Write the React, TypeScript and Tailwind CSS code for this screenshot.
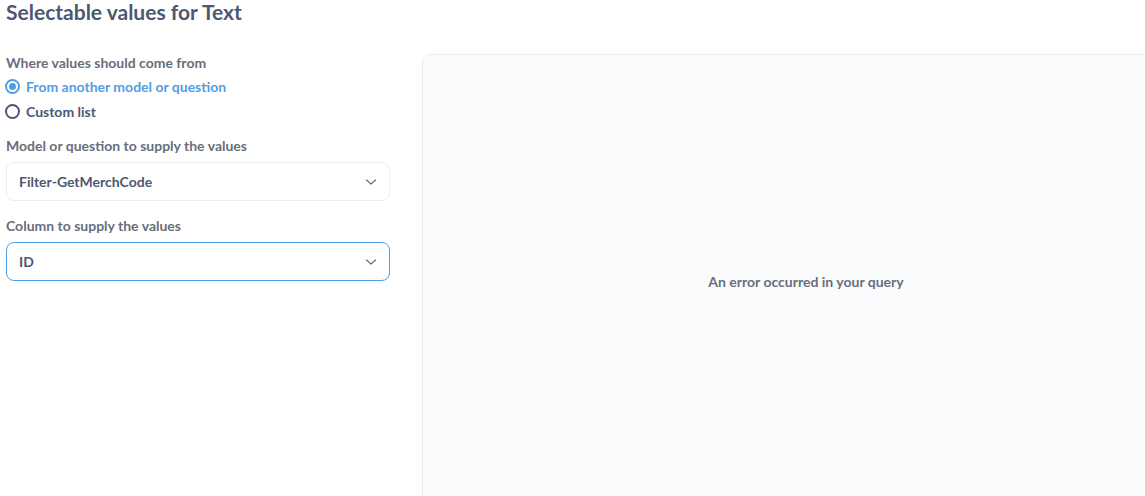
import React from "react";

function Chevron() {
  return (
    <svg width="12" height="8" viewBox="0 0 12 8" fill="none" className="shrink-0">
      <path d="M1.5 2 L6 6 L10.5 2" stroke="#696e7b" strokeWidth="1.2" strokeLinecap="round" strokeLinejoin="round" />
    </svg>
  );
}

function Radio({ checked, label }: { checked: boolean; label: string }) {
  return (
    <div className="flex items-center gap-[6px] h-[25px]">
      {checked ? (
        <span className="w-[15px] h-[15px] rounded-full border-2 border-[#509ee3] flex items-center justify-center">
          <span className="w-[7px] h-[7px] rounded-full bg-[#509ee3]" />
        </span>
      ) : (
        <span className="w-[15px] h-[15px] rounded-full border-2 border-[#4c5773]" />
      )}
      <span className={checked ? "text-[#509ee3]" : "text-[#4c5773]"}>{label}</span>
    </div>
  );
}

function Select({ value, focused }: { value: string; focused?: boolean }) {
  return (
    <div
      className={
        "h-[39px] rounded-[8px] border flex items-center justify-between pl-[12px] pr-[12px] text-[#4c5773] " +
        (focused ? "border-[#509ee3]" : "border-[#eeecec]")
      }
    >
      <span>{value}</span>
      <Chevron />
    </div>
  );
}

export default function App() {
  return (
    <div
      className="w-[1145px] h-[496px] overflow-hidden bg-white text-[14px] font-bold"
      style={{ fontFamily: "Lato, 'Noto Sans', sans-serif" }}
    >
      <h1 className="pl-[6px] text-[21px] leading-[24px] font-bold text-[#4c5773] h-[54px]">
        Selectable values for Text
      </h1>
      <div className="flex">
        <div className="w-[422px] shrink-0 pl-[5px] pr-[32px]">
          <div className="text-[#696e7b] leading-[18px] pl-[1px]">Where values should come from</div>
          <div className="mt-[2px]">
            <Radio checked label="From another model or question" />
            <Radio checked={false} label="Custom list" />
          </div>
          <div className="pl-[1px]">
            <div className="text-[#696e7b] leading-[18px] mt-[13px]">Model or question to supply the values</div>
            <div className="mt-[7px]">
              <Select value="Filter-GetMerchCode" />
            </div>
            <div className="text-[#696e7b] leading-[18px] mt-[16px]">Column to supply the values</div>
            <div className="mt-[7px]">
              <Select value="ID" focused />
            </div>
          </div>
        </div>
        <div className="w-[768px] h-[454px] shrink-0 rounded-tl-[8px] border border-[#eeecec] bg-[#f9fbfc] flex items-center justify-center">
          <span className="text-[#696e7b]">An error occurred in your query</span>
        </div>
      </div>
    </div>
  );
}
